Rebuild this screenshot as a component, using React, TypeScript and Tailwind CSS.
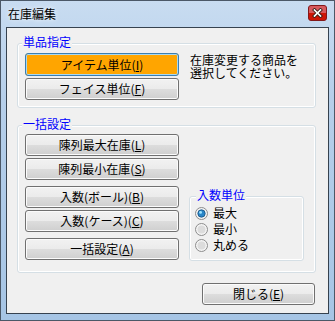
import React from "react";

const font = { fontFamily: '"Noto Sans CJK JP", "Noto Sans", sans-serif' };

function Btn({
  children,
  w = "w-[154px]",
  h = "h-[22px]",
  focused = false,
}: {
  children: React.ReactNode;
  w?: string;
  h?: string;
  focused?: boolean;
}) {
  if (focused) {
    return (
      <div
        className={`${w} ${h} shrink-0 rounded-[3px] border border-[#3c7fb1] bg-[#ffa500] shadow-[inset_0_0_0_1px_#a8d8f0] flex items-center justify-center text-[12px] leading-[14px] text-black`}
      >
        {children}
      </div>
    );
  }
  return (
    <div
      className={`${w} ${h} shrink-0 rounded-[3px] border border-[#707070] bg-[linear-gradient(to_bottom,#f2f2f2_0%,#ebebeb_50%,#dddddd_50%,#cfcfcf_100%)] shadow-[inset_0_0_0_1px_#fbfbfb] flex items-center justify-center text-[12px] leading-[14px] text-black`}
    >
      {children}
    </div>
  );
}

function U({ children }: { children: React.ReactNode }) {
  return <span className="underline underline-offset-[1px]">{children}</span>;
}

function Radio({ checked }: { checked?: boolean }) {
  return (
    <svg width="13" height="13" viewBox="0 0 13 13" className="shrink-0">
      <circle cx="6.5" cy="6.5" r="6" fill="#f4f4f4" stroke="#8c8c8c" strokeWidth="1" />
      {checked ? (
        <>
          <circle cx="6.5" cy="6.5" r="3.7" fill="#2a86c8" stroke="#17507f" strokeWidth="0.8" />
          <circle cx="5.6" cy="5.4" r="1.4" fill="#9fe4ff" />
        </>
      ) : (
        <circle cx="6.5" cy="6.5" r="4" fill="#dcdcdc" />
      )}
    </svg>
  );
}

function CloseBtn() {
  return (
    <div className="relative mt-[4px] mr-[2px] w-[19px] h-[16px] shrink-0 rounded-[3px] border border-red-900 bg-red-700 overflow-hidden flex flex-col">
      <div className="h-[7px] bg-white/35" />
      <div className="flex-1 bg-orange-500/20" />
      <div className="absolute inset-0 flex items-center justify-center">
        <svg width="11" height="10" viewBox="0 0 11 10">
          <path d="M2.5 2 L8.5 8 M8.5 2 L2.5 8" stroke="#3a1a14" strokeWidth="3.4" strokeLinecap="square" />
          <path d="M2.5 2 L8.5 8 M8.5 2 L2.5 8" stroke="#ffffff" strokeWidth="1.7" strokeLinecap="square" />
        </svg>
      </div>
    </div>
  );
}

function Legend({ children, left = "left-[4px]" }: { children: React.ReactNode; left?: string }) {
  return (
    <span
      className={`absolute -top-[9px] ${left} px-[1px] bg-[#f0f0f0] text-[#0000ff] text-[12px] leading-[14px]`}
    >
      {children}
    </span>
  );
}

export default function App() {
  return (
    <div
      style={font}
      className="w-[335px] h-[321px] border border-[#4b5867] bg-[linear-gradient(to_bottom,#c8dcf1_0%,#b6cfea_30%,#a6c5e5_100%)] flex flex-col px-[5px] pb-[6px] select-none"
    >
      {/* title bar */}
      <div className="h-[26px] shrink-0 flex items-start justify-between">
        <div className="pl-[2px] pt-[6px] text-[12px] leading-[14px] text-black [text-shadow:0_0_5px_#ffffff]">
          在庫編集
        </div>
        <CloseBtn />
      </div>

      {/* client area */}
      <div className="flex-1 border border-[#36424f] bg-[#f0f0f0] flex flex-col pl-[10px] pr-[12px] pt-[15px]">
        {/* group 1 */}
        <div className="relative h-[65px] rounded-[3px] border border-[#d5dfe5] shadow-[inset_0_0_0_1px_#ffffff] pl-[7px] pt-[9px] flex">
          <Legend>単品指定</Legend>
          <div className="flex flex-col gap-[2px]">
            <Btn focused h="h-[23px]">
              アイテム単位(<U>I</U>)
            </Btn>
            <Btn>
              フェイス単位(<U>F</U>)
            </Btn>
          </div>
          <div className="ml-[11px] text-[12px] leading-[13px] text-black">
            <div>在庫変更する商品を</div>
            <div>選択してください。</div>
          </div>
        </div>

        {/* group 2 */}
        <div className="relative mt-[17px] h-[148px] rounded-[3px] border border-[#d5dfe5] shadow-[inset_0_0_0_1px_#ffffff] pl-[7px] pt-[8px] flex">
          <Legend>一括設定</Legend>
          <div className="flex flex-col">
            <Btn>
              陳列最大在庫(<U>L</U>)
            </Btn>
            <div className="h-[2px]" />
            <Btn>
              陳列最小在庫(<U>S</U>)
            </Btn>
            <div className="h-[6px]" />
            <Btn>
              入数(ボール)(<U>B</U>)
            </Btn>
            <div className="h-[2px]" />
            <Btn>
              入数(ケース)(<U>C</U>)
            </Btn>
            <div className="h-[6px]" />
            <Btn>
              一括設定(<U>A</U>)
            </Btn>
          </div>
          <div className="relative ml-[10px] mt-[62px] w-[115px] h-[65px] rounded-[3px] border border-[#d5dfe5] shadow-[inset_0_0_0_1px_#ffffff] pl-[5px] pt-[8px] flex flex-col">
            <Legend left="left-[6px]">入数単位</Legend>
            <div className="h-[16px] flex items-center gap-[5px] text-[12px] leading-[14px] text-black">
              <Radio checked />
              <span>最大</span>
            </div>
            <div className="h-[16px] flex items-center gap-[5px] text-[12px] leading-[14px] text-black">
              <Radio />
              <span>最小</span>
            </div>
            <div className="h-[16px] flex items-center gap-[5px] text-[12px] leading-[14px] text-black">
              <Radio />
              <span>丸める</span>
            </div>
          </div>
        </div>

        {/* footer */}
        <div className="mt-[10px] flex justify-end pr-[1px]">
          <Btn w="w-[113px]">
            閉じる(<U>E</U>)
          </Btn>
        </div>
      </div>
    </div>
  );
}
